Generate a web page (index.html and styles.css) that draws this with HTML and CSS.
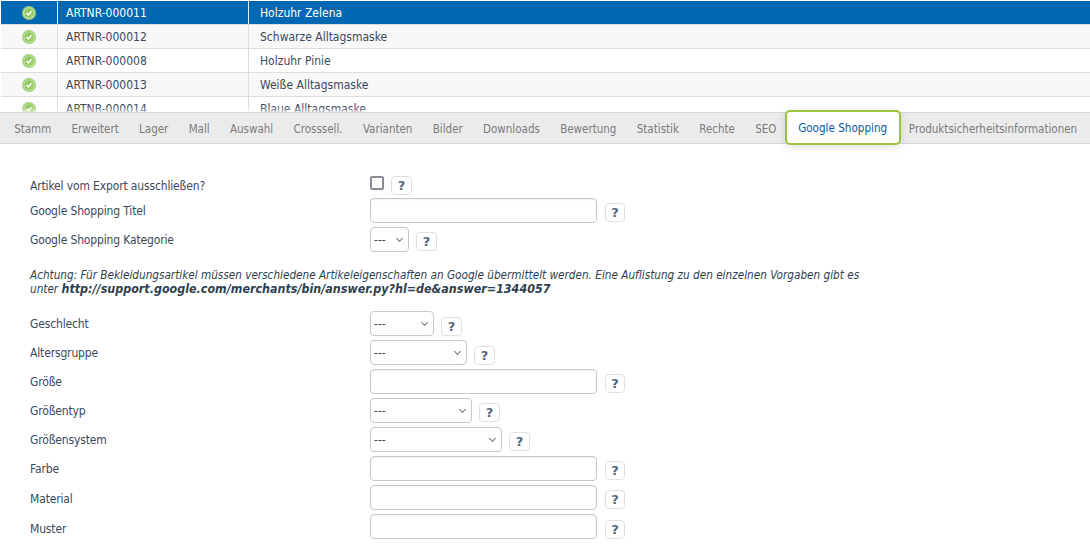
FILE: index.html
```
<!DOCTYPE html>
<html lang="de">
<head>
<meta charset="utf-8">
<title>Google Shopping</title>
<link rel="stylesheet" href="styles.css">
</head>
<body>
<svg class="defs" width="0" height="0" aria-hidden="true">
  <symbol id="ok" viewBox="0 0 14 14">
    <circle cx="7" cy="7" r="7" fill="#9ed07a"/>
    <circle cx="7" cy="7" r="5.6" fill="#c4e3a9"/>
    <circle cx="7" cy="7" r="4.7" fill="#92ca68"/>
    <path d="M4.5 7.1l1.8 1.8 3.3-3.7" fill="none" stroke="#fafdf5" stroke-width="1.5"/>
  </symbol>
</svg>
<div class="list">
  <div class="row sel"><div class="c-ic"><svg class="ok"><use href="#ok"/></svg></div><div class="c-nr">ARTNR-000011</div><div class="c-name">Holzuhr Zelena</div></div>
  <div class="row"><div class="c-ic"><svg class="ok"><use href="#ok"/></svg></div><div class="c-nr">ARTNR-000012</div><div class="c-name">Schwarze Alltagsmaske</div></div>
  <div class="row odd"><div class="c-ic"><svg class="ok"><use href="#ok"/></svg></div><div class="c-nr">ARTNR-000008</div><div class="c-name">Holzuhr Pinie</div></div>
  <div class="row"><div class="c-ic"><svg class="ok"><use href="#ok"/></svg></div><div class="c-nr">ARTNR-000013</div><div class="c-name">Weiße Alltagsmaske</div></div>
  <div class="row odd"><div class="c-ic"><svg class="ok"><use href="#ok"/></svg></div><div class="c-nr">ARTNR-000014</div><div class="c-name">Blaue Alltagsmaske</div></div>
</div>
<nav class="tabs">
  <a class="tab">Stamm</a><a class="tab">Erweitert</a><a class="tab">Lager</a><a class="tab">Mall</a><a class="tab">Auswahl</a><a class="tab">Crosssell.</a><a class="tab">Varianten</a><a class="tab">Bilder</a><a class="tab">Downloads</a><a class="tab">Bewertung</a><a class="tab">Statistik</a><a class="tab">Rechte</a><a class="tab">SEO</a><a class="tab active">Google Shopping</a><a class="tab">Produktsicherheitsinformationen</a>
</nav>
<main class="form">
  <div class="f-row first"><label>Artikel vom Export ausschließen?</label><div class="ctl"><input type="checkbox" class="cb"><span class="help">?</span></div></div>
  <div class="f-row"><label>Google Shopping Titel</label><div class="ctl"><input type="text" class="txt"><span class="help">?</span></div></div>
  <div class="f-row"><label>Google Shopping Kategorie</label><div class="ctl"><span class="sel-box w39">---</span><span class="help near">?</span></div></div>
  <p class="note">Achtung: Für Bekleidungsartikel müssen verschiedene Artikeleigenschaften an Google übermittelt werden. Eine Auflistung zu den einzelnen Vorgaben gibt es unter <b>http://support.google.com/merchants/bin/answer.py?hl=de&amp;answer=1344057</b></p>
  <div class="f-row"><label>Geschlecht</label><div class="ctl"><span class="sel-box w64">---</span><span class="help near low">?</span></div></div>
  <div class="f-row"><label>Altersgruppe</label><div class="ctl"><span class="sel-box w97">---</span><span class="help near low">?</span></div></div>
  <div class="f-row"><label>Größe</label><div class="ctl"><input type="text" class="txt"><span class="help">?</span></div></div>
  <div class="f-row"><label>Größentyp</label><div class="ctl"><span class="sel-box w102">---</span><span class="help near">?</span></div></div>
  <div class="f-row"><label>Größensystem</label><div class="ctl"><span class="sel-box w132">---</span><span class="help near">?</span></div></div>
  <div class="f-row"><label>Farbe</label><div class="ctl"><input type="text" class="txt"><span class="help">?</span></div></div>
  <div class="f-row"><label class="drop1">Material</label><div class="ctl"><input type="text" class="txt"><span class="help">?</span></div></div>
  <div class="f-row"><label class="drop2">Muster</label><div class="ctl"><input type="text" class="txt"><span class="help low">?</span></div></div>
</main>
</body>
</html>
```
FILE: styles.css
```
html, body { margin: 0; padding: 0; height: 549px; overflow: hidden; background: #fff; }
body { font-family: "DejaVu Sans", Verdana, sans-serif; font-stretch: condensed; font-size: 12px; color: #3a4a5a; }
.defs { position: absolute; }
.list { height: 111px; overflow: hidden; padding: 1px 0 0 1px; }
.row { display: flex; height: 23px; border-bottom: 1px solid #dcdcdc; line-height: 25px; background: #f8f8f8; }
.row.odd { background: #fff; }
.row.sel { background: #0068b3; color: #fff; border-bottom-color: #dcdcdc; }
.c-ic { width: 56px; display: flex; justify-content: center; align-items: center; border-right: 1px solid #dcdcdc; }
.c-nr { width: 182px; padding-left: 8px; border-right: 1px solid #dcdcdc; }
.c-name { padding-left: 11px; }
.row.sel .c-ic, .row.sel .c-nr { border-right-color: #e8eef5; }
.ok { width: 14px; height: 14px; }
.tabs { position: relative; display: flex; height: 30px; background: #ebebeb; border-top: 1px solid #d8d8d8; border-bottom: 1px solid #d8d8d8; box-shadow: 0 -2px 4px rgba(255,255,255,.7); padding-left: 4px; font-size: 11.5px; }
.tab { padding: 0 10.15px; line-height: 32px; color: #7b7b7b; white-space: nowrap; }
.tab.active { position: relative; z-index: 1; margin: -3px -2px -2px; height: 31px; line-height: 32px; padding: 0 11.5px; font-size: 11.6px; background: #fff; color: #0a5a9c; border: 2px solid #9cc33c; border-radius: 5px; box-shadow: 0 2px 8px rgba(0,0,0,.12); }
.form { padding: 0 0 0 30px; }
.f-row { display: flex; height: 29px; align-items: flex-start; }
.f-row.first { margin-top: 28px; height: 26px; }
.f-row.first label { line-height: 26px; padding-top: 1px; }
.f-row label { width: 340px; flex: none; line-height: 27px; letter-spacing: -.15px; color: #3a4a5a; }
.f-row label.drop1 { line-height: 29px; }
.f-row label.drop2 { line-height: 30px; }
.ctl { display: flex; align-items: flex-start; }
.cb { appearance: none; width: 14px; height: 14px; margin: 4px 0 0; border: 2px solid #8a8a98; border-radius: 2px; box-sizing: border-box; background: #fff; }
.txt { width: 227px; height: 25px; margin: 0; box-sizing: border-box; border: 1px solid #c8c8c8; border-radius: 4px; box-shadow: inset 0 1px 2px rgba(0,0,0,.06); background: #fff; }
.sel-box { position: relative; display: block; height: 25px; box-sizing: border-box; border: 1px solid #c8c8c8; border-radius: 4px; line-height: 24px; padding-left: 3px; background: #fff; color: #444; }
.sel-box::after { content: ""; position: absolute; right: 6px; top: 8px; width: 4px; height: 4px; border-right: 1px solid #777; border-bottom: 1px solid #777; transform: rotate(45deg); }
.w39 { width: 39px; } .w64 { width: 64px; } .w97 { width: 97px; } .w102 { width: 102px; } .w132 { width: 132px; }
.help { display: block; width: 20px; height: 19px; margin: 5px 0 0 8px; box-sizing: border-box; border: 1px solid #e0e0e0; border-radius: 4px; text-align: center; line-height: 18px; font-stretch: normal; font-weight: bold; font-size: 13px; color: #55657b; background: #fff; }
.help.near { margin-left: 7px; width: 21px; }
.help.low { margin-top: 6px; }
.cb + .help { margin: 4px 0 0 7px; width: 21px; }
.note { width: 836px; margin: 12px 0 15px; font-size: 11.66px; font-style: italic; line-height: 14px; color: #2f3f4f; }
.note b { font-size: 12.4px; line-height: 14px; }
```
